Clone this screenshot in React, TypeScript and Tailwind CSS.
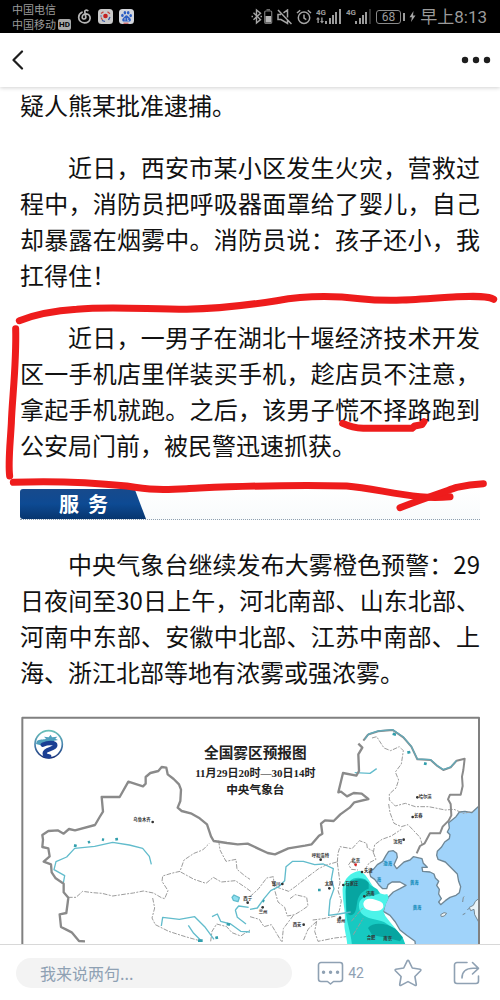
import React from 'react';

const cjk = "font-['Noto_Sans_CJK_SC',sans-serif]";

function SignalBars({ arrows, dim }: { arrows?: boolean; dim?: boolean }) {
  return (
    <svg width="26" height="17" viewBox="0 0 26 17" fill="#9b9b9b" aria-hidden="true">
      <text x="0" y="7" fontSize="8" fontWeight="700" fontFamily="Roboto, sans-serif">4G</text>
      {arrows && <path d="M2 9l2 2.5H2.8V15H1.4v-3.5H0zM6 15.5L4 13h1.2V9.5h1.4V13H8z" />}
      <rect x="9" y="13" width="2" height="3" />
      <rect x="13" y="10" width="2" height="6" />
      <rect x="16" y="7" width="2" height="9" />
      <rect x="19" y="4" width="2" height="12" />
      <rect x="23" y="1" width="2" height="15" fill={dim ? '#333' : '#9b9b9b'} />
    </svg>
  );
}

function StatusBar() {
  return (
    <div className="flex h-[33px] shrink-0 items-center bg-black pl-3 pr-[13px] text-[#9b9b9b]">
      <div className="text-[11px] leading-[15px]">
        <div>中国电信</div>
        <div className="flex items-center gap-[2px]">
          <span>中国移动</span>
          <span className="rounded-[2px] bg-[#a8a8a8] px-[1px] font-['Roboto',sans-serif] text-[8px] font-bold leading-[11px] text-black">HD</span>
        </div>
      </div>
      <div className="ml-[6px] flex items-center gap-[6px]">
        <svg width="15" height="15" viewBox="0 0 15 15" fill="none" stroke="#b5b5b5" strokeWidth="1.7" strokeLinecap="round" aria-hidden="true">
          <path d="M10.8 1.6C9.5.6 7.6 1.1 7.8 2.8l1 5.2c.4 2.4-3.6 2.8-3.6.2C5.2 5.8 7.2 4.700 9 4.800c2.800.2 4.300 2.200 4.100 4.600-.3 3-2.900 4.600-5.600 4.500C4.200 13.800 1.600 11.500 1.700 8.200 1.800 5.700 3.200 4 5 3.200" />
        </svg>
        <svg width="15" height="15" viewBox="0 0 15 15" fill="none" aria-hidden="true">
          <rect width="15" height="15" rx="3.5" fill="#c9c9c9" />
          <circle cx="7.5" cy="7" r="2.3" fill="#c3201f" />
          <path d="M3 4.5l2.500-1.700M9.500 2.800L12 4.800M3 8.500l1.500 2.500" stroke="#c3483f" strokeWidth="1.200" />
          <path d="M12 8l-1.500 3M4 11.500l3 1M3 6.500v1" stroke="#3556a5" strokeWidth="1.3" />
        </svg>
        <svg width="15" height="15" viewBox="0 0 15 15" fill="#2d5fc4" aria-hidden="true">
          <rect width="15" height="15" rx="3.5" fill="#d3d6dc" />
          <ellipse cx="3.4" cy="6.4" rx="1.3" ry="1.7" />
          <ellipse cx="5.9" cy="3.7" rx="1.3" ry="1.8" />
          <ellipse cx="9.2" cy="3.7" rx="1.3" ry="1.8" />
          <ellipse cx="11.7" cy="6.6" rx="1.3" ry="1.7" />
          <path d="M7.500 6.200c1.300 0 1.800 1.300 2.700 2.100 1.200 1 2 1.900 1.600 3.100-.6 1.700-2.600 1-4.300 1s-3.700.7-4.200-1c-.4-1.300.6-2.200 1.600-3.100.9-.8 1.300-2.100 2.600-2.100z" />
          <path d="M6 9v2.500M8.700 9v2.500h1.200" stroke="#d3d6dc" strokeWidth=".8" fill="none" />
          <path d="M4.500 14.200h5" stroke="#c4423e" strokeWidth="1" />
        </svg>
      </div>
      <div className="ml-auto flex items-center gap-1">
        <svg width="22" height="17" viewBox="0 0 22 17" fill="none" stroke="#a5a5a5" strokeWidth="1.400" aria-hidden="true">
          <path d="M2.500 4.800l7 6.800-4 3.400V2l4 3.200-7 6.600M.5 8.500h1.500M9.500 8.500H11" />
          <rect x="13.700" y="3" width="7" height="12.300" rx="1" strokeWidth="1.200" stroke="#777" />
          <path d="M15.500 1.800h3.500" stroke="#777" />
          <rect x="14.500" y="8" width="5.500" height="6.500" fill="#b5b5b5" stroke="none" />
        </svg>
        <svg width="15" height="16" viewBox="0 0 15 16" fill="none" stroke="#a5a5a5" strokeWidth="1.500" aria-hidden="true">
          <path d="M1 1l13.500 14M4 5.500H1v5h3l6.500 4V11M6.500 3.800L10.500 1v7.500" />
        </svg>
        <svg width="16" height="16" viewBox="0 0 16 16" fill="none" stroke="#a5a5a5" strokeWidth="1.500" aria-hidden="true">
          <circle cx="8" cy="8.700" r="5.700" />
          <path d="M8 5.500v3.600l2.300 1.500M1 4l3.200-2.800M15 4l-3.200-2.800" />
        </svg>
        <SignalBars arrows />
        <SignalBars dim />
        <div className="flex items-center gap-[2px]">
          <span className="rounded-[3px] border border-[#8a8a8a] px-[5px] font-['Roboto',sans-serif] text-[12px] leading-[12px]">68</span>
          <span className="h-2 w-[2px] bg-[#9b9b9b]" />
          <svg width="7" height="11" viewBox="0 0 7 11" fill="#a5a5a5" className="ml-[2px]" aria-hidden="true">
            <path d="M4.500 0L.5 6.200h2.400L2 11l4.500-6.500H4z" />
          </svg>
        </div>
        <span className="whitespace-nowrap font-['Roboto','Noto_Sans_CJK_SC',sans-serif] text-[17px] leading-6">早上8:13</span>
      </div>
    </div>
  );
}

function NavBar() {
  return (
    <header className="relative z-10 flex h-[54px] shrink-0 items-center justify-between bg-white px-3 shadow-[0_1px_4px_rgba(0,0,0,0.18)]">
      <button type="button" aria-label="返回">
        <svg width="12" height="20" viewBox="0 0 12 20" fill="none" stroke="#1d1d1d" strokeWidth="2.2" strokeLinecap="round" strokeLinejoin="round">
          <path d="M10 1.500L1.500 10l8.500 8.500" />
        </svg>
      </button>
      <button type="button" aria-label="更多" className="-mr-[3px]">
        <svg width="30" height="8" viewBox="0 0 30 8" fill="#1d1d1d">
          <circle cx="4" cy="4" r="3.2" />
          <circle cx="15" cy="4" r="3.2" />
          <circle cx="26" cy="4" r="3.2" />
        </svg>
      </button>
    </header>
  );
}

function SectionBanner() {
  return (
    <div className="relative h-[31px] bg-gradient-to-b from-white to-[#f8fbfc]">
      <div className="absolute inset-x-0 bottom-0 border-b border-dotted border-[#8fa0b0]" />
      <h2 className="relative flex h-[30px] w-[126px] items-center rounded-l-[3px] bg-linear-to-b from-[#174a8c] via-[#0d4a93] to-[#07366f] pl-[39px] text-[20px] font-bold leading-[30px] text-white [clip-path:polygon(0_0,91%_0,100%_100%,0_100%)]">
        服&nbsp;&nbsp;务
      </h2>
    </div>
  );
}

const places: [number, number, string][] = [
  [400, 340, '乌鲁木齐'], [935, 446, '呼和浩特'], [1256, 270, '哈尔滨'], [1242, 327, '长春'],
  [1180, 405, '沈阳'], [1054, 463, '北京'], [1092, 493, '天津'], [1036, 530, '石家庄'],
  [974, 530, '太原'], [815, 531, '银川'], [730, 576, '西宁'], [776, 615, '兰州'],
  [878, 653, '西安'], [1010, 641, '郑州'], [1098, 561, '济南'], [1100, 694, '合肥'], [1150, 695, '南京'],
];

const dots: [number, number][] = [
  [458, 342], [962, 455], [1252, 268], [1238, 327], [1211, 395], [1086, 492], [1030, 531],
  [988, 541], [847, 528], [788, 598], [911, 650], [1020, 629], [1093, 565], [743, 584],
];

function FogMap() {
  return (
    <svg viewBox="60 24 1380 720" className="block w-full" fill="none" strokeLinejoin="round" role="img" aria-label="全国雾区预报图">
      <defs>
        <linearGradient id="ring" x1="0" y1="0" x2="0" y2="1">
          <stop offset="0" stopColor="#69c0b8" />
          <stop offset=".5" stopColor="#4a86b0" />
          <stop offset="1" stopColor="#162d76" />
        </linearGradient>
      </defs>

      {/* sea */}
      <g transform="translate(1110 270)">
        <path
          fill="#a0d3fa"
          stroke="#6f8796"
          strokeWidth="4"
          d="M327 24L305 44 285 40 268 42 258 56 246 66 236 74 238 90 232 102 240 110 238 122 224 132 214 148 202 160 200 172 204 184 226 192 244 210 262 228 266 250 272 266 268 284 258 292 240 298 226 308 212 320 206 312 214 302 206 288 208 274 200 262 206 250 196 240 192 228 180 222 158 220 156 208 172 208 160 196 156 182 130 176 120 186 102 192 80 212 72 200 82 178 80 166 70 158 56 160 48 172 38 190 22 200 10 214 -2 220 2 236 14 244 26 260 38 272 50 272 54 260 66 252 90 252 108 262 90 272 70 282 56 296 46 316 40 340 60 352 76 372 90 396 110 412 135 430 140 480 327 480z"
        />
        <path fill="#e9f3f8" stroke="#758792" strokeWidth="3" d="M326 302l-10 8-6 12-12 6 4 10 10-4 2 16 12 22zM212 350l10-6 8 2-7 8-9 2zM278 312l2-14 3-2M278 350l8-4M292 336l6-6" />
      </g>

      {/* fog areas */}
      <g transform="translate(900 420)">
        <path fill="#4cf3e9" d="M180 68C152 72 132 92 128 120C126 160 138 190 134 220C130 245 142 265 142 300H320L305 268 290 246 270 222 256 204 250 190 258 168 266 150 262 138C250 142 235 136 226 122C212 112 206 84 180 68z" />
        <path fill="#17c9c1" d="M136 130C138 94 168 82 196 94L212 112 232 124 240 136C220 146 200 144 186 152C172 162 176 186 184 196C200 214 230 214 252 222L292 248 308 268 320 300H156C156 260 138 220 138 190z" />
        <path fill="#07a5a1" d="M138 116C150 92 190 84 206 104L206 122C188 128 176 140 172 160C168 182 168 200 152 202C136 200 140 176 138 160zM204 240C220 220 260 226 286 242L308 268 300 280C270 270 240 266 216 260z" />
        <path fill="#fff" d="M190 166C194 150 212 150 228 156C240 160 252 162 250 178C244 190 230 190 214 188C200 186 190 180 190 166z" />
      </g>

      {/* provinces */}
      <g stroke="#9c9c9c" strokeWidth="3" strokeDasharray="14 4 6 4">
        <path d="M204 568l24 0 20-18 30 4 28 2 32 8 40-6 22-3 30-6 30 6 24 14 10 3 10-24-18-28 2-16 26-8 26-6 12-34 30-20 26-10 20-20" />
        <path d="M656 398l4 28 18 34 30-6 3 30 24 20 15 10M542 492l40 22 36 12 22-18 24 14 42-4 30 20 16 12M458 570l6 30-8 30 10 20 40 20 50 16 50 14M632 700l4-30 14-22 30 8 16 18 26 10 28-18" />
        <path d="M1116 90l14-4 22 34 20 8 26-12 12 12-6 40-18 24 10 24-8 24-20 18 0 18 18 18 30-8 30 10 40 0 50 10 26-2 28 12 30-6M1166 288l4 26 12 32 22 10 20-6 36 38 8 26M1120 434l4-24 22-16 28-10 30-20M1120 434l8 20-20 10-14 22M1012 462l2-26 6-20 36 6 22-24 22 8 2 14 18 10M1010 462l-34 10-20 10-40 30-30 24-20 14-34-12-18-18M1012 464l8 60-6 24 10 30-6 30-10 16-38 8-32 4M1068 476l-12-20-10 14 8 14 20 2M750 566l26-24 24-32 20-4 4 40 10 36 20 16 8 26 22-4 20-12 20-14-4-26-34-8-16 12M750 626l28 8 14 22 22-6 30 50M880 622l-30 40-4 40M950 640l-26 24-14 34M950 640l-6 30 10 30 50-10 34-4M1054 640l34-40M1060 680l30-50" />
      </g>

      {/* rivers */}
      <g stroke="#62bccc" strokeWidth="4">
        <path d="M190 525l4-22-32-18 6-24 32-14 24-26 60-6 54-12 50 8 40 10 20 24 6 24M484 654l4-26 50 6 46-8 30 30 28 38M636 626l16-8 10 22 30 8 30 22 28 2M565 652l16 24 24 24M750 604l22-4 20-28 20-24 24-12 18-18 4-42 20-16 32 0 34 10 26-2 30 14-6 32 8 28-12 34-4 46 30-4 36-6" />
        <path d="M706 606l10-12 30 4M706 606l6 22 26 20M1064 194l46 2 20-14" />
        <path d="M696 568l6-7 16 8-4 12-14-4z" fill="#8fdff0" />
        <path d="M222 412l8 2M264 404l6-3M306 394l6 2M346 394l8-1M594 698h14M680 648l10 2M646 690l8-2M1178 77l10 3M1222 134l9-2M1272 166l8 2M954 546h8M788 578l5 2" strokeWidth="8" stroke="#329fad" />
      </g>

      {/* border */}
      <g stroke="#8a8a8a" strokeWidth="7">
        <path d="M255 700l-18-1-22-26-16-8-16-8-4-38 20-4 4-30 2-16-14-16 0-26-24-16-12-18-2-24-22-8 18-16-4-24-18-4 2-22-2-14 18-12 28-2 18 10 16-14 18 4 60-16 14-24 10-16-4-44h54l26-46 44 14 8-8 0-20 14-12 24-6 10-12 14 2 4 20 18 14 16 16 6 16-2 34-8 20 12 10 30 8 24 14 22 18 12 36 8 14 40 6 32 4 30-2 30 14 30 14 22 4 40-18 50-8 20-4 22-26 10-6-4-30 12-10 26 2 20-20 28-20 14-16 42-10-20-16-24-2-20 10-18-14-8 2 14-58 40 8 8-14-2-50 12-20-12-12" />
        <path d="M1090 98l14-18 30-10 44-4 32 22 24 28 18 38 40 2 20 18 18 12 22-8 18-20 24-6-4 34-4 20 2 28-6 26h-32l-6 14 8 14 2 34-8 16-18 18-8 20-30 0-16 30-14 8-10 22" strokeWidth="6" />
        <path d="M1094 94l12-16 28-9 44-4 32 22 24 28 18 38 40 2 20 18 18 12 22-8 18-20" stroke="#62a9b8" strokeWidth="4" />
      </g>

      <g fill="#0b87b5" fontFamily="Noto Sans CJK SC, sans-serif" fontSize="13" fontWeight="700">
        <text x="1150" y="472">渤海</text>
        <text x="1130" y="520">海</text>
        <text x="1230" y="528">黄海</text>
        <text x="1238" y="603">黄海</text>
      </g>
      <g fill="#333" fontFamily="Noto Sans CJK SC, sans-serif" fontSize="13" fontWeight="700">
        {places.map(([x, y, name]) => (
          <text key={name} x={x} y={y}>{name}</text>
        ))}
        {dots.map(([x, y]) => (
          <circle key={`${x}-${y}`} cx={x} cy={y} r="4" />
        ))}
        <circle cx="1067" cy="470" r="4" fill="#d22" />
      </g>

      {/* bureau logo */}
      <circle cx="146" cy="109" r="41" stroke="url(#ring)" strokeWidth="5" />
      <path fill="#4fa0bd" d="M110 100c8-8 20-4 28-8l-6-6 14 2 6-8 4 8 16-2-6 6 8 4-12 2-4 6c-12 2-18 6-28 4l-8 4-14-4z" />
      <path stroke="#1b3f94" strokeWidth="13" strokeLinecap="round" d="M128 110c14-6 38-8 38 2 0 12-32 10-32 24 0 6 6 9 14 9" />

      <g fill="#222" fontWeight="700" textAnchor="middle">
        <text x="766" y="150" fontSize="44" fontFamily="Liberation Serif, Noto Sans CJK SC, serif">全国雾区预报图</text>
        <text x="766" y="208" fontSize="33" fontFamily="Liberation Serif, Noto Sans CJK SC, serif">11月29日20时—30日14时</text>
        <text x="766" y="257" fontSize="35" fontFamily="Noto Sans CJK SC, sans-serif">中央气象台</text>
      </g>
      <rect x="67" y="29" width="1370" height="760" stroke="#808080" strokeWidth="6" />
    </svg>
  );
}

function RedMarks() {
  return (
    <svg viewBox="0 0 1500 720" className="pointer-events-none absolute inset-x-0 top-[203px] w-full" fill="none" stroke="#ee1c1c" strokeWidth="21" strokeLinecap="round" strokeLinejoin="round" aria-hidden="true">
      <path d="M58 92C110 72 170 62 230 58C330 48 440 58 560 58C660 56 740 46 830 32C920 16 1010 18 1080 26C1170 36 1260 28 1370 20C1430 18 1465 18 1481 28" />
      <path d="M47 116C50 220 36 330 34 400C30 470 24 520 29 558" />
      <path d="M40 577C170 572 280 578 380 588C450 600 490 600 560 596C700 590 850 582 1040 588C1110 594 1180 612 1260 620C1300 624 1330 622 1350 620" />
      <path d="M1200 653C1270 626 1330 606 1370 592C1405 584 1430 582 1450 581" />
      <path d="M1028 400C1050 410 1070 414 1090 415H1236L1244 408L1266 404L1272 395" />
    </svg>
  );
}

function CommentBar() {
  return (
    <footer className="relative z-10 flex h-14 shrink-0 items-center border-t border-[#d8d8d8] bg-white pl-4 pr-5 text-[#8fa1b3]">
      <input
        type="text"
        aria-label="评论"
        placeholder="我来说两句..."
        className="h-[30px] min-w-0 flex-1 rounded-full bg-[#f3f3f3] pl-6 pr-4 text-base leading-6 outline-none placeholder:text-[#8fa1b3]"
      />
      <button type="button" aria-label="评论 42" className="ml-[25px] flex items-center gap-1">
        <svg width="27" height="24" viewBox="0 0 27 24" fill="none" stroke="currentColor" strokeWidth="1.6" strokeLinejoin="round">
          <path d="M4 1.500h19a2.500 2.500 0 0 1 2.500 2.500v14a2.500 2.500 0 0 1-2.500 2.500h-6.500L13.500 23l-3-2.500H4A2.500 2.500 0 0 1 1.500 18V4A2.500 2.500 0 0 1 4 1.500z" />
          <path d="M6.500 11.200h.1M13.500 11.200h.1M20.500 11.200h.1" strokeWidth="3.4" strokeLinecap="round" />
        </svg>
        <span className="font-['Roboto',sans-serif] text-sm">42</span>
      </button>
      <button type="button" aria-label="收藏" className="ml-[30px]">
        <svg width="28" height="28" viewBox="0 0 28 28" fill="none" stroke="currentColor" strokeWidth="1.6" strokeLinejoin="round">
          <path d="M13.200 1.800q.8-1.200 1.600 0l3.500 7.200 7.800 1.200q1.300.4.500 1.500l-5.700 5.800 1.400 8q0 1.300-1.200.9L14 22.600l-7.100 3.800q-1.200.4-1.200-.9l1.400-8-5.700-5.800q-.8-1.100.5-1.500L9.700 9z" />
        </svg>
      </button>
      <button type="button" aria-label="分享" className="ml-[31px]">
        <svg width="27" height="24" viewBox="0 0 27 24" fill="none" stroke="currentColor" strokeWidth="1.6" strokeLinecap="round" strokeLinejoin="round">
          <path d="M14 1.500H4A2.500 2.500 0 0 0 1.500 4v16A2.500 2.500 0 0 0 4 22.500h19a2.500 2.500 0 0 0 2.500-2.500v-5" />
          <path d="M19.500 1.500l6 5.800-6 5.700M25 7.300h-5C13 7.300 9 11 9 17" />
        </svg>
      </button>
    </footer>
  );
}

export default function App() {
  return (
    <div lang="zh-CN" className={`flex h-screen flex-col bg-white ${cjk}`}>
      <StatusBar />
      <NavBar />
      <main className="min-h-0 flex-1 overflow-y-auto [scrollbar-width:none]">
        <article className="relative space-y-[26px] px-5 text-justify text-[24px] leading-[36px] text-[#111]">
          <p>疑人熊某批准逮捕。</p>
          <p className="indent-[2em]">近日，西安市某小区发生火灾，营救过程中，消防员把呼吸器面罩给了婴儿，自己却暴露在烟雾中。消防员说：孩子还小，我扛得住！</p>
          <p className="indent-[2em]">近日，一男子在湖北十堰经济技术开发区一手机店里佯装买手机，趁店员不注意，拿起手机就跑。之后，该男子慌不择路跑到公安局门前，被民警迅速抓获。</p>
          <SectionBanner />
          <p className="indent-[2em]">中央气象台继续发布大雾橙色预警：29日夜间至30日上午，河北南部、山东北部、河南中东部、安徽中北部、江苏中南部、上海、浙江北部等地有浓雾或强浓雾。</p>
          <FogMap />
          <RedMarks />
        </article>
      </main>
      <CommentBar />
    </div>
  );
}
